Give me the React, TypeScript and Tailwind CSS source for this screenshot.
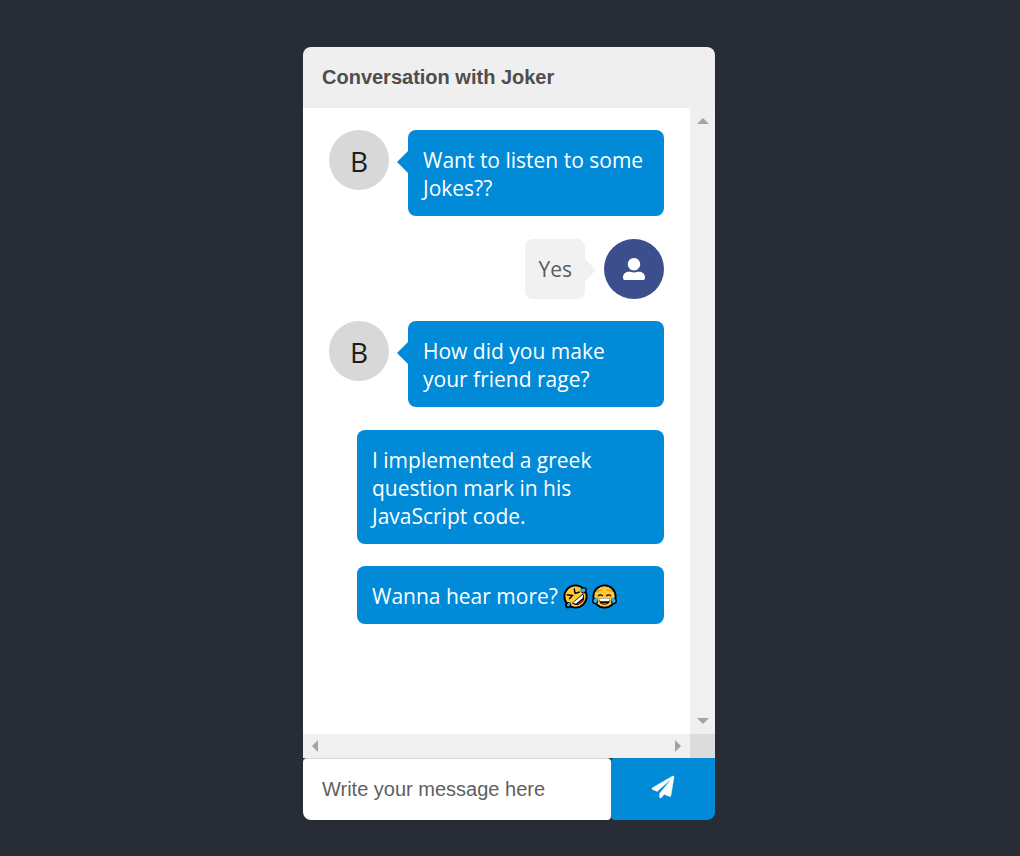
import React from "react";
import { FaPaperPlane, FaUserAlt } from "react-icons/fa";

function RollingLaughEmoji() {
  return (
    <svg role="img" aria-label="rolling on the floor laughing" viewBox="0 0 72 72" className="inline-block size-[25px] align-[-5px]">
      <circle cx="36" cy="36" r="32" fill="#ffc83d" stroke="#000" strokeWidth="5.5" />
      <circle cx="60" cy="18" r="9" />
      <circle cx="15" cy="61" r="9" />
      <path d="M48 18q7-7 16-4 2 8-4 10-6 1-12-6z" fill="#26b5e8" />
      <path d="M22 53q-9 1-11 7 0 6 6 4 5-3 5-11z" fill="#26b5e8" />
      <path d="M28 55L57 30q6 11-2 21-12 14-27 4z" fill="#000" stroke="#000" strokeWidth="3" strokeLinejoin="round" />
      <path d="M29 54L57 31q3 5-1 10L38 56q-5 1-9-2z" fill="#fff" />
      <path d="M42 58l15-13q-1 12-15 13z" fill="#e8302e" />
      <path d="M11 31l16 2-9 10M32 13l3 14 13-4" fill="none" stroke="#000" strokeWidth="4" />
    </svg>
  );
}

function TearsOfJoyEmoji() {
  return (
    <svg role="img" aria-label="face with tears of joy" viewBox="0 0 72 72" className="ml-1 inline-block size-[25px] align-[-5px]">
      <circle cx="36" cy="36" r="32" fill="#ffc83d" stroke="#000" strokeWidth="5.5" />
      <circle cx="9" cy="49" r="9" />
      <circle cx="63" cy="49" r="9" />
      <path d="M14 23q4-7 15-5M43 18q11-2 15 5" fill="none" stroke="#e19717" strokeWidth="4" />
      <path d="M17 35q7-7 14 0M41 35q7-7 14 0" fill="none" stroke="#000" strokeWidth="3.4" />
      <path d="M20 42h32q0 18-16 18T20 42z" fill="#000" />
      <path d="M21 42h30q1 8-4 8H25q-5 0-4-8z" fill="#fff" />
      <path d="M28 56q8-4 16 0-8 5-16 0z" fill="#e8302e" />
      <path
        d="M17 38q-9 1-13 8-1 8 5 9 9-1 8-17zM55 38q9 1 13 8 1 8-5 9-9-1-8-17z"
        fill="#26b5e8"
      />
    </svg>
  );
}

function BotMessage({ children }: { children: React.ReactNode }) {
  return (
    <div className="mb-[23px] flex items-start gap-[19px]">
      <div className="flex size-[60px] shrink-0 items-center justify-center rounded-full bg-[#d8d8d8] pt-0.5 text-[28px] leading-none text-[#1d1d1d]">
        B
      </div>
      <div className="relative flex-1 rounded-lg bg-[#008ad7] px-[15px] pt-4 pb-3.5 text-white">
        <span className="absolute top-[21px] right-full border-y-[11px] border-r-[11px] border-y-transparent border-r-[#008ad7]" />
        {children}
      </div>
    </div>
  );
}

function BotFollowUp({ children }: { children: React.ReactNode }) {
  return <div className="mb-[22px] ml-7 rounded-lg bg-[#008ad7] px-[15px] pt-4 pb-3.5 text-white">{children}</div>;
}

function UserMessage({ children }: { children: React.ReactNode }) {
  return (
    <div className="mb-[22px] flex justify-end gap-[19px]">
      <div className="relative flex items-center rounded-lg bg-[#f1f1f1] px-[13px] text-[#5c5c5c]">
        {children}
        <span className="absolute top-5 left-full border-y-[11px] border-l-[11px] border-y-transparent border-l-[#f1f1f1]" />
      </div>
      <div className="flex size-[60px] shrink-0 items-center justify-center rounded-full bg-[#3d4e8d] text-white">
        <FaUserAlt size={22} />
      </div>
    </div>
  );
}

function ScrollArrow({ label, points, wide }: { label: string; points: string; wide?: boolean }) {
  return (
    <button type="button" aria-label={label} className="flex size-6 items-center justify-center text-[#a3a3a3]">
      <svg width={wide ? 12 : 6} height={wide ? 6 : 12} fill="currentColor">
        <polygon points={points} />
      </svg>
    </button>
  );
}

export default function App() {
  return (
    <div className="flex min-h-screen justify-center bg-[#282c34] pt-[47px] pr-0.5 pb-9">
      <main className="flex w-full max-w-[412px] flex-col overflow-hidden rounded-lg">
        <header className="bg-[#efefef] px-[19px] py-4">
          <h1 className="font-['Liberation_Sans',Arial,sans-serif] text-[20px] leading-[29px] font-bold text-[#4e4e4e]">
            Conversation with Joker
          </h1>
        </header>

        <div className="grid flex-1 grid-cols-[1fr_25px] grid-rows-[1fr_24px] bg-white">
          <section
            aria-label="Messages"
            className="px-[26px] pt-[22px] font-['Open_Sans','Noto_Sans',sans-serif] text-[21px] leading-7"
          >
            <BotMessage>Want to listen to some Jokes??</BotMessage>
            <UserMessage>Yes</UserMessage>
            <BotMessage>How did you make your friend rage?</BotMessage>
            <BotFollowUp>I implemented a greek question mark in his JavaScript code.</BotFollowUp>
            <BotFollowUp>
              Wanna hear more? <RollingLaughEmoji />
              <TearsOfJoyEmoji />
            </BotFollowUp>
          </section>
          <div className="flex flex-col items-center justify-between bg-[#f0f0f0] py-px">
            <ScrollArrow label="Scroll up" points="0,6 6,0 12,6" wide />
            <ScrollArrow label="Scroll down" points="0,0 12,0 6,6" wide />
          </div>
          <div className="flex items-center justify-between bg-[#f0f0f0]">
            <ScrollArrow label="Scroll left" points="6,0 6,12 0,6" />
            <ScrollArrow label="Scroll right" points="0,0 6,6 0,12" />
          </div>
          <div className="bg-[#dcdcdc]" />
        </div>

        <form className="flex h-[62px]" onSubmit={(event) => event.preventDefault()}>
          <input
            type="text"
            aria-label="Message"
            placeholder="Write your message here"
            className="min-w-0 flex-1 rounded-sm border-t border-[#d8d8d8] bg-white px-[19px] pb-0.5 font-['Liberation_Sans',Arial,sans-serif] text-[20px] text-[#5c5c5c] outline-none placeholder:text-[#5f5f5f]"
          />
          <button
            type="submit"
            aria-label="Send"
            className="flex w-[104px] items-center justify-center rounded-l-sm bg-[#008ad7] pb-1 text-white"
          >
            <FaPaperPlane size={22} stroke="currentColor" strokeWidth={10} className="overflow-visible" />
          </button>
        </form>
      </main>
    </div>
  );
}
